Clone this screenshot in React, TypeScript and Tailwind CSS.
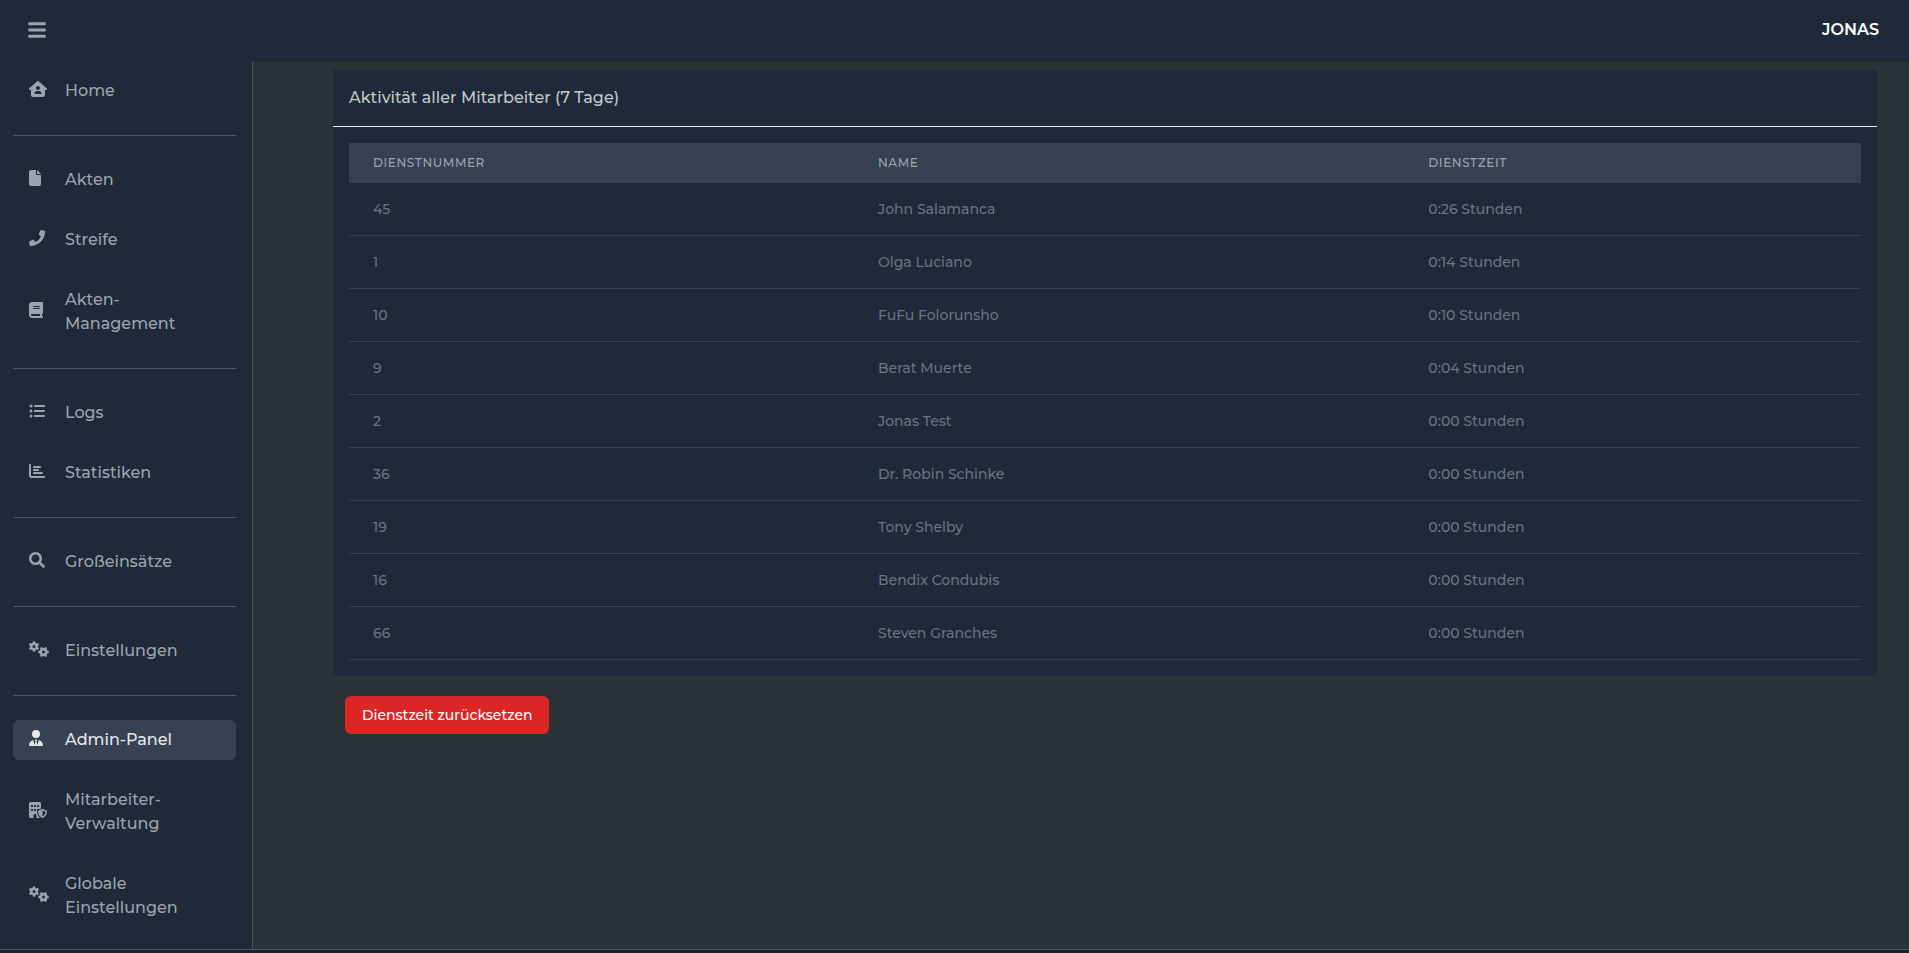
import { FaBars, FaPhone, FaSearch } from "react-icons/fa";
import {
  FaBook,
  FaBuildingShield,
  FaChartBar,
  FaFile,
  FaGears,
  FaHouseUser,
  FaListUl,
  FaUserTie,
} from "react-icons/fa6";

const NAV_GROUPS = [
  [{ icon: FaHouseUser, size: "w-[18px]", label: "Home" }],
  [
    { icon: FaFile, size: "w-3", label: "Akten" },
    { icon: FaPhone, size: "w-4", label: "Streife" },
    { icon: FaBook, size: "w-3.5", label: "Akten-Management" },
  ],
  [
    { icon: FaListUl, size: "w-4", label: "Logs" },
    { icon: FaChartBar, size: "w-4", label: "Statistiken" },
  ],
  [{ icon: FaSearch, size: "w-4", label: "Großeinsätze" }],
  [{ icon: FaGears, size: "w-5", label: "Einstellungen" }],
  [
    { icon: FaUserTie, size: "w-3.5", label: "Admin-Panel", active: true },
    { icon: FaBuildingShield, size: "w-[18px]", label: "Mitarbeiter-Verwaltung" },
    { icon: FaGears, size: "w-5", label: "Globale Einstellungen" },
  ],
];

const EMPLOYEES = [
  { number: 45, name: "John Salamanca", time: "0:26" },
  { number: 1, name: "Olga Luciano", time: "0:14" },
  { number: 10, name: "FuFu Folorunsho", time: "0:10" },
  { number: 9, name: "Berat Muerte", time: "0:04" },
  { number: 2, name: "Jonas Test", time: "0:00" },
  { number: 36, name: "Dr. Robin Schinke", time: "0:00" },
  { number: 19, name: "Tony Shelby", time: "0:00" },
  { number: 16, name: "Bendix Condubis", time: "0:00" },
  { number: 66, name: "Steven Granches", time: "0:00" },
];

function Sidebar() {
  return (
    <aside className="w-[253px] shrink-0 border-r border-[#4b5563] bg-[#1f2937] pt-[9px] pr-4 pb-5 pl-[13px]">
      <nav className="divide-y divide-[#4b5563]">
        {NAV_GROUPS.map((group) => (
          <ul
            key={group[0].label}
            className="flex flex-col gap-5 py-6 first:pt-0 last:pb-0"
          >
            {group.map((item) => (
              <li key={item.label}>
                <a
                  href="#"
                  aria-current={item.active ? "page" : undefined}
                  className={
                    item.active
                      ? "flex items-center gap-4 rounded-md bg-[#374151] px-4 py-2 text-[#e5e7eb]"
                      : "flex items-center gap-4 rounded-md px-4 py-2 text-[#9ca3af]"
                  }
                >
                  <span className="w-5 shrink-0 pb-1">
                    <item.icon className={`h-4 ${item.size}`} />
                  </span>
                  <span className="w-32 font-medium">{item.label}</span>
                </a>
              </li>
            ))}
          </ul>
        ))}
      </nav>
    </aside>
  );
}

function ActivityTable() {
  return (
    <table className="w-full text-left">
      <thead className="bg-[#374151] text-xs tracking-wider text-[#9ca3af] uppercase">
        <tr>
          <th className="w-[33.4%] px-6 py-3 font-medium">Dienstnummer</th>
          <th className="w-[36.4%] px-6 py-3 font-medium">Name</th>
          <th className="px-6 py-3 font-medium">Dienstzeit</th>
        </tr>
      </thead>
      <tbody className="text-sm font-medium text-[#6b7280]">
        {EMPLOYEES.map((employee) => (
          <tr key={employee.number} className="border-b border-[#374151]">
            <td className="px-6 py-4">{employee.number}</td>
            <td className="px-6 py-4">{employee.name}</td>
            <td className="px-6 py-4">{employee.time} Stunden</td>
          </tr>
        ))}
      </tbody>
    </table>
  );
}

export default function App() {
  return (
    <div className="flex min-h-screen flex-col bg-[#2a3137] font-['Montserrat','Inter',sans-serif]">
      <header className="flex items-center justify-between bg-[#1f2937] px-7 pt-[18px] pb-5">
        <button type="button" aria-label="Menü" className="text-[#9ca3af]">
          <FaBars className="h-5 w-[18px]" />
        </button>
        <span className="pr-0.5 font-semibold text-white">JONAS</span>
      </header>

      <div className="flex flex-1">
        <Sidebar />

        <main className="flex-1 pt-2 pr-8 pl-20">
          <section className="bg-[#1f2937]">
            <h1 className="border-b border-[#e5e7eb] p-4 font-medium text-[#c3c6ca]">
              Aktivität aller Mitarbeiter (7 Tage)
            </h1>
            <div className="p-4">
              <ActivityTable />
            </div>
          </section>

          <button
            type="button"
            className="mt-5 ml-3 rounded-md border border-transparent bg-[#dc2626] px-4 py-2 text-sm font-medium text-white"
          >
            Dienstzeit zurücksetzen
          </button>
        </main>
      </div>

      <footer className="h-1 border-t border-[#4b5563] bg-[#1a222c]" />
    </div>
  );
}
